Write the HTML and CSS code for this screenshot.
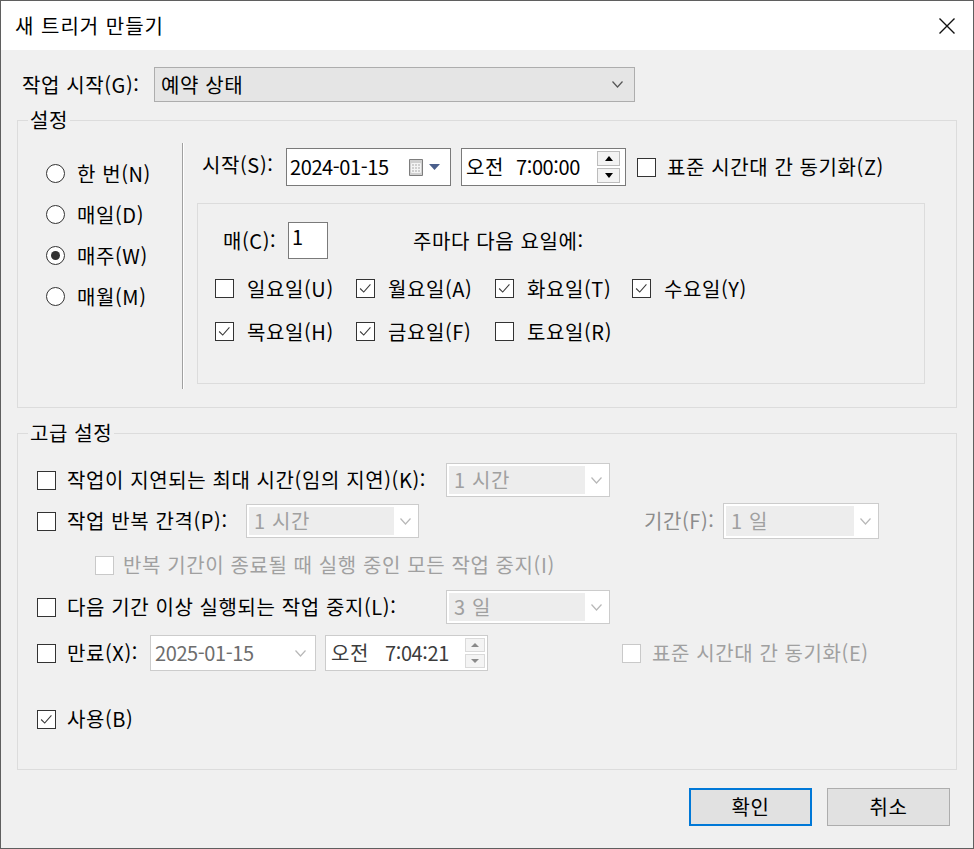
FILE: index.html
```html
<!DOCTYPE html>
<html lang="ko">
<head>
<meta charset="utf-8">
<title>새 트리거 만들기</title>
<link rel="stylesheet" href="styles.css">
</head>
<body>
<div class="window">
  <header class="titlebar">
    <span class="title">새 트리거 만들기</span>
    <svg class="close" viewBox="0 0 16 16"><path d="M0.5 0.5L15.5 15.5M15.5 0.5L0.5 15.5"/></svg>
  </header>
  <main class="content">
    <div class="begin">
      <span class="begin-label">작업 시작(G):</span>
      <div class="combo-main"><span>예약 상태</span><svg class="chev" viewBox="0 0 11 7"><path d="M0.5 0.5L5.5 6L10.5 0.5"/></svg></div>
    </div>

    <fieldset class="group settings">
      <legend>설정</legend>
      <div class="settings-body">
        <div class="radios">
          <div class="radio-row"><span class="radio"></span><span>한 번(N)</span></div>
          <div class="radio-row"><span class="radio"></span><span>매일(D)</span></div>
          <div class="radio-row"><span class="radio on"></span><span>매주(W)</span></div>
          <div class="radio-row"><span class="radio"></span><span>매월(M)</span></div>
        </div>
        <div class="sep"></div>
        <div class="sched">
          <div class="start-row">
            <span class="start-label">시작(S):</span>
            <div class="field date">
              <span class="digits">2024-01-15</span>
              <span class="cal-group">
                <svg class="cal" viewBox="0 0 14 17"><path class="cal-body" d="M0.5 0.5H13.5V16.5H0.5Z"/><path class="cal-grid" d="M2.5 4.5H11.5M2.5 7.5H11.5M2.5 10.5H11.5M2.5 13.5H11.5M2.5 4.5V13.5M5.5 4.5V13.5M8.5 4.5V13.5M11.5 4.5V13.5"/></svg>
                <svg class="caret" viewBox="0 0 11 6"><path d="M0 0H11L5.5 6Z"/></svg>
              </span>
            </div>
            <div class="field time">
              <span>오전</span><span class="clock digits">7:00:00</span>
              <div class="spin"><span class="spin-btn up"></span><span class="spin-btn down"></span></div>
            </div>
            <span class="cb sync-cb"></span><span class="sync-label">표준 시간대 간 동기화(Z)</span>
          </div>
          <div class="weekly">
            <div class="recur">
              <span class="recur-label">매(C):</span>
              <div class="num">1</div>
              <span class="recur-text">주마다 다음 요일에:</span>
            </div>
            <div class="days">
              <div class="day"><span class="cb"></span><span>일요일(U)</span></div>
              <div class="day"><span class="cb"><svg viewBox="0 0 19 19"><path d="M3.5 9.5L7.5 13.5L15 5"/></svg></span><span>월요일(A)</span></div>
              <div class="day"><span class="cb"><svg viewBox="0 0 19 19"><path d="M3.5 9.5L7.5 13.5L15 5"/></svg></span><span>화요일(T)</span></div>
              <div class="day"><span class="cb"><svg viewBox="0 0 19 19"><path d="M3.5 9.5L7.5 13.5L15 5"/></svg></span><span>수요일(Y)</span></div>
              <div class="day"><span class="cb"><svg viewBox="0 0 19 19"><path d="M3.5 9.5L7.5 13.5L15 5"/></svg></span><span>목요일(H)</span></div>
              <div class="day"><span class="cb"><svg viewBox="0 0 19 19"><path d="M3.5 9.5L7.5 13.5L15 5"/></svg></span><span>금요일(F)</span></div>
              <div class="day"><span class="cb"></span><span>토요일(R)</span></div>
            </div>
          </div>
        </div>
      </div>
    </fieldset>

    <fieldset class="group advanced">
      <legend>고급 설정</legend>
      <div class="arow r1">
        <span class="cb"></span>
        <span class="lbl-wide">작업이 지연되는 최대 시간(임의 지연)(K):</span>
        <div class="dcombo w164"><span class="sel">1 시간</span><span class="chev-wrap"><svg class="chev" viewBox="0 0 11 7"><path d="M0.5 0.5L5.5 6L10.5 0.5"/></svg></span></div>
      </div>
      <div class="arow r2">
        <span class="cb"></span>
        <span class="lbl-repeat">작업 반복 간격(P):</span>
        <div class="dcombo w173"><span class="sel">1 시간</span><span class="chev-wrap"><svg class="chev" viewBox="0 0 11 7"><path d="M0.5 0.5L5.5 6L10.5 0.5"/></svg></span></div>
        <span class="lbl-dur">기간(F):</span>
        <div class="dcombo w156"><span class="sel">1 일</span><span class="chev-wrap"><svg class="chev" viewBox="0 0 11 7"><path d="M0.5 0.5L5.5 6L10.5 0.5"/></svg></span></div>
      </div>
      <div class="arow r3">
        <span class="cb dis"></span>
        <span class="gray">반복 기간이 종료될 때 실행 중인 모든 작업 중지(I)</span>
      </div>
      <div class="arow r4">
        <span class="cb"></span>
        <span class="lbl-wide">다음 기간 이상 실행되는 작업 중지(L):</span>
        <div class="dcombo w164"><span class="sel">3 일</span><span class="chev-wrap"><svg class="chev" viewBox="0 0 11 7"><path d="M0.5 0.5L5.5 6L10.5 0.5"/></svg></span></div>
      </div>
      <div class="arow r5">
        <span class="cb"></span>
        <span class="lbl-exp">만료(X):</span>
        <div class="dfield ddate"><span class="digits">2025-01-15</span><svg class="chev" viewBox="0 0 11 7"><path d="M0.5 0.5L5.5 6L10.5 0.5"/></svg></div>
        <div class="dfield dtime">
          <span>오전</span><span class="clock2 digits">7:04:21</span>
          <div class="spin small"><span class="spin-btn up"></span><span class="spin-btn down"></span></div>
        </div>
        <span class="cb dis exp-cb"></span>
        <span class="gray exp-sync">표준 시간대 간 동기화(E)</span>
      </div>
      <div class="arow r6">
        <span class="cb"><svg viewBox="0 0 19 19"><path d="M3.5 9.5L7.5 13.5L15 5"/></svg></span>
        <span>사용(B)</span>
      </div>
    </fieldset>

    <div class="buttons">
      <button class="btn primary" type="button">확인</button>
      <button class="btn" type="button">취소</button>
    </div>
  </main>
</div>
</body>
</html>
```
FILE: styles.css
```css
* { box-sizing: border-box; }
html, body { margin: 0; padding: 0; }
body {
  background: #f0f0f0;
  font-family: "Noto Sans CJK KR", "Noto Sans", sans-serif;
  font-size: 20px;
  line-height: 1;
  letter-spacing: 0.6px;
  color: #000;
}
.digits { letter-spacing: -0.4px; }
.window {
  width: 974px;
  height: 849px;
  border: 1px solid #5f5f5f;
  background: #f0f0f0;
  display: flex;
  flex-direction: column;
  overflow: hidden;
}
.titlebar {
  flex: 0 0 49px;
  background: #fff;
  display: flex;
  align-items: center;
  justify-content: space-between;
  padding: 0 18px 0 14px;
}
.title { font-size: 20px; letter-spacing: 1px; }
.close { width: 16px; height: 16px; fill: none; stroke: #111; stroke-width: 1.4; }

.content { padding: 0 16px; display: flex; flex-direction: column; }

.begin { display: flex; align-items: center; height: 35px; margin-top: 17px; padding-left: 5px; }
.begin-label { width: 132px; }
.combo-main {
  width: 481px; height: 35px;
  background: #e5e5e5; border: 1px solid #adadad;
  display: flex; align-items: center; justify-content: space-between;
  padding: 0 11px 0 6px;
}
.chev { width: 11px; height: 7px; fill: none; stroke: #555; stroke-width: 1.2; flex: none; }

.group { margin: 0; padding: 0 10px; border: 1px solid #dcdcdc; min-width: 0; }
.group > legend { padding: 0 2px; font-size: 20px; line-height: 20px; }
.settings { margin-top: 8px; }
.settings-body { display: flex; align-items: flex-start; }

.radios { width: 154px; flex: none; padding-top: 23px; display: flex; flex-direction: column; }
.radio-row { height: 41px; display: flex; align-items: center; padding-left: 18px; gap: 12px; }
.radio {
  width: 19px; height: 19px; border: 1px solid #333; border-radius: 50%;
  background: #fff; display: flex; align-items: center; justify-content: center; flex: none;
}
.radio.on::after { content: ""; width: 9px; height: 9px; border-radius: 50%; background: #333; }

.sep { width: 2px; height: 246px; margin-top: 13px; border-left: 1px solid #a0a0a0; border-right: 1px solid #fff; flex: none; }

.sched { padding: 0 0 23px 13px; display: flex; flex-direction: column; }
.start-row { display: flex; align-items: center; height: 38px; margin-top: 18px; padding-left: 5px; }
.start-label { width: 84px; margin-top: -5px; }
.field { height: 38px; background: #fff; border: 1px solid #7a7a7a; display: flex; align-items: center; flex: none; }
.date { width: 165px; padding: 0 10px 0 3px; justify-content: space-between; }
.cal-group { display: flex; align-items: center; gap: 6px; }
.cal { width: 14px; height: 17px; }
.cal-body { fill: #cfcfcf; stroke: #7d7d7d; stroke-width: 1; }
.cal-grid { fill: none; stroke: #f4f4f4; stroke-width: 1; }
.caret { width: 11px; height: 6px; fill: #4a5f8c; }
.time { width: 165px; margin-left: 10px; padding: 0 5px 0 4px; }
.clock { margin-left: 12px; }
.spin { margin-left: auto; width: 23px; display: flex; flex-direction: column; gap: 2px; }
.spin-btn { height: 15px; border: 1px solid #bcbcbc; background: #f3f3f3; display: flex; align-items: center; justify-content: center; }
.spin-btn.up::after { content: ""; border-left: 4px solid transparent; border-right: 4px solid transparent; border-bottom: 5px solid #000; }
.spin-btn.down::after { content: ""; border-left: 4px solid transparent; border-right: 4px solid transparent; border-top: 5px solid #000; }
.sync-cb { margin-left: 11px; }
.sync-label { margin-left: 11px; }

.cb { width: 19px; height: 19px; border: 1px solid #333; background: #fff; flex: none; display: flex; }
.cb svg { width: 100%; height: 100%; fill: none; stroke: #3a3a3a; stroke-width: 1.2; }
.cb.dis { border-color: #c9c9c9; }

.weekly { width: 728px; height: 181px; margin-top: 17px; border: 1px solid #dcdcdc; padding: 18px 0 0 17px; }
.recur { display: flex; align-items: center; height: 37px; padding-left: 8px; }
.recur-label { width: 65px; }
.num { width: 40px; height: 37px; background: #fff; border: 1px solid #7a7a7a; padding: 4px 0 0 3px; }
.recur-text { margin-left: 85px; }
.days { display: grid; grid-template-columns: 141px 139px 137px auto; grid-auto-rows: 43px; margin-top: 8px; }
.day { display: flex; align-items: center; gap: 13px; }

.advanced { margin-top: 15px; padding-bottom: 32px; }
.arow { display: flex; align-items: center; height: 36px; }
.arow > .cb { margin-left: 9px; margin-right: 11px; }
.r1 { margin-top: 19px; }
.r2 { margin-top: 5px; }
.r3 { margin-top: 8px; }
.r4 { margin-top: 6px; }
.r5 { margin-top: 10px; }
.r6 { margin-top: 30px; }
.arow > .cb.dis { margin-left: 67px; margin-right: 9px; }
.arow > .cb.exp-cb { margin-left: 134px; margin-right: 11px; }

.lbl-wide { width: 379px; flex: none; }
.lbl-repeat { width: 179px; flex: none; }
.lbl-dur { margin-left: 225px; width: 79px; color: #8c8c8c; flex: none; }
.lbl-exp { width: 83px; flex: none; }
.gray { color: #a0a0a0; }

.dcombo { height: 34px; background: #fff; border: 1px solid #cccccc; padding: 2px; display: flex; align-items: stretch; flex: none; }
.dcombo .sel { flex: 1; background: #ededed; color: #a0a0a0; display: flex; align-items: center; padding-left: 5px; }
.dcombo .chev-wrap { width: 22px; display: flex; align-items: center; justify-content: center; }
.dcombo .chev, .dfield .chev { stroke: #b8b8b8; }
.w164 { width: 164px; }
.w173 { width: 173px; }
.w156 { width: 156px; height: 36px; }

.dfield { height: 36px; background: #fff; border: 1px solid #cccccc; display: flex; align-items: center; flex: none; }
.ddate { width: 166px; padding: 0 9px 0 4px; justify-content: space-between; color: #6d6d6d; }
.dtime { width: 163px; margin-left: 9px; padding: 0 2px 0 5px; color: #3c3c3c; }
.clock2 { margin-left: 16px; }
.spin.small { width: 20px; gap: 2px; }
.spin.small .spin-btn { height: 14px; border-color: #dadada; background: #f4f4f4; }
.spin.small .spin-btn.up::after { border-bottom-color: #8a8a8a; border-left-width: 4px; border-right-width: 4px; border-bottom-width: 4px; }
.spin.small .spin-btn.down::after { border-top-color: #8a8a8a; border-left-width: 4px; border-right-width: 4px; border-top-width: 4px; }

.buttons { display: flex; justify-content: flex-end; gap: 15px; margin-top: 18px; padding-right: 7px; }
.btn {
  width: 123px; height: 38px;
  background: #e1e1e1; border: 1px solid #adadad;
  font-family: "Noto Sans CJK KR", "Noto Sans", sans-serif;
  font-size: 20px; line-height: 1; letter-spacing: 0.6px; color: #000; padding: 0;
}
.btn.primary { border: 2px solid #0078d7; }
```
